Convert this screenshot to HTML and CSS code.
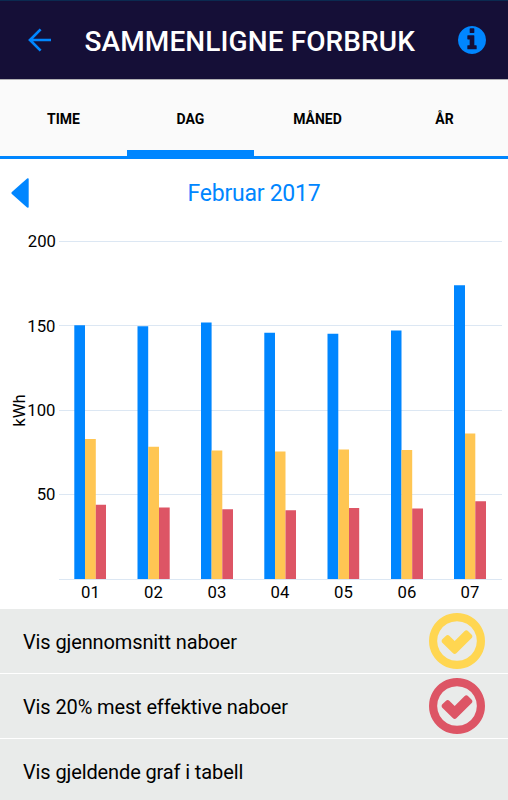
FILE: index.html
```
<!DOCTYPE html>
<html lang="no">
<head>
<meta charset="utf-8">
<title>Sammenligne forbruk</title>
<link rel="stylesheet" href="styles.css">
</head>
<body>
<header class="header">
  <svg class="back" viewBox="0 0 24 24" width="24" height="24"><path d="M12.600 1.400 2 12l10.600 10.600M2 12h21" fill="none" stroke="#0086ff" stroke-width="2.700"/></svg>
  <h1 class="title">SAMMENLIGNE FORBRUK</h1>
  <svg class="info" viewBox="128 128 1536 1536" width="28" height="28"><path fill="#0086ff" d="M1152 1376v-160q0-14-9-23t-23-9h-96v-512q0-14-9-23t-23-9h-320q-14 0-23 9t-9 23v160q0 14 9 23t23 9h96v320h-96q-14 0-23 9t-9 23v160q0 14 9 23t23 9h448q14 0 23-9t9-23zm-128-896v-192q0-14-9-23t-23-9h-192q-14 0-23 9t-9 23v192q0 14 9 23t23 9h192q14 0 23-9t9-23zm640 416q0 209-103 385.5t-279.5 279.5-385.5 103-385.5-103-279.5-279.5-103-385.5 103-385.5 279.5-279.5 385.5-103 385.5 103 279.5 279.5 103 385.5z"/></svg>
</header>
<nav class="tabs">
  <a class="tab">TIME</a>
  <a class="tab active">DAG</a>
  <a class="tab">MÅNED</a>
  <a class="tab">ÅR</a>
</nav>
<div class="period">
  <svg class="prev" viewBox="0 0 18 30" width="18" height="30"><path d="M17.700 1v28q0 1-1.600.6L.9 16q-1-1 0-2L16.100 .4q1.600-.4 1.600.6z" fill="#0086ff"/></svg>
  <span class="month">Februar 2017</span>
</div>
<svg class="chart" viewBox="0 228 508 381" width="508" height="381">
  <path class="grid" d="M59 241.500H502M59 325.500H502M59 410.500H502M59 494.500H502M59 579.500H502"/>
  <g class="ylabels">
    <text x="56" y="246.500">200</text>
    <text x="55.500" y="331.500">150</text>
    <text x="55.500" y="416">100</text>
    <text x="55.500" y="500">50</text>
  </g>
  <text class="unit" transform="translate(24.500 410.500) rotate(-90)">kWh</text>
  <path class="own" d="M74.300 579V325.300h10.700V579zM137.500 579V326.300h10.700V579zM201 579V322.500h10.600V579zM264.300 579V332.800H275V579zM327.500 579V333.700h10.800V579zM391 579V330.500h10.500V579zM454 579V285.300h11V579z"/>
  <path class="avg" d="M85 579V439h10.800V579zM148.200 579V446.800H159V579zM211.600 579V450.500h10.700V579zM275 579V451.500h10.500V579zM338.300 579V449.600H349V579zM401.500 579V450h10.700V579zM465 579V433.500h10.300V579z"/>
  <path class="best" d="M95.800 579V504.700H106V579zM159 579V507.400h10.700V579zM222.300 579V509.300H233V579zM285.500 579V510.300H296V579zM349 579V508h10.200V579zM412.200 579V508.400H423V579zM475.300 579V501.300H486V579z"/>
  <g class="xlabels">
    <text x="90.500" y="597.500">01</text>
    <text x="153.500" y="597.500">02</text>
    <text x="217" y="597.500">03</text>
    <text x="280" y="597.500">04</text>
    <text x="343.500" y="597.500">05</text>
    <text x="407" y="597.500">06</text>
    <text x="470" y="597.500">07</text>
  </g>
</svg>
<ul class="options">
  <li class="option"><span class="label">Vis gjennomsnitt naboer</span>
    <svg class="check yellow" viewBox="128 128 1536 1536" width="56" height="56"><path d="M1299 813l-422 422q-19 19-45 19t-45-19l-294-294q-19-19-19-45t19-45l102-102q19-19 45-19t45 19l147 147 275-275q19-19 45-19t45 19l102 102q19 19 19 45t-19 45zm141 83q0-148-73-273t-198-198-273-73-273 73-198 198-73 273 73 273 198 198 273 73 273-73 198-198 73-273zm224 0q0 209-103 385.5t-279.5 279.5-385.5 103-385.5-103-279.5-279.5-103-385.5 103-385.5 279.5-279.5 385.5-103 385.5 103 279.5 279.5 103 385.5z"/></svg>
  </li>
  <li class="option"><span class="label">Vis 20% mest effektive naboer</span>
    <svg class="check red" viewBox="128 128 1536 1536" width="56" height="56"><path d="M1299 813l-422 422q-19 19-45 19t-45-19l-294-294q-19-19-19-45t19-45l102-102q19-19 45-19t45 19l147 147 275-275q19-19 45-19t45 19l102 102q19 19 19 45t-19 45zm141 83q0-148-73-273t-198-198-273-73-273 73-198 198-73 273 73 273 198 198 273 73 273-73 198-198 73-273zm224 0q0 209-103 385.5t-279.5 279.5-385.5 103-385.5-103-279.5-279.5-103-385.5 103-385.5 279.5-279.5 385.5-103 385.5 103 279.5 279.5 103 385.5z"/></svg>
  </li>
  <li class="option"><span class="label">Vis gjeldende graf i tabell</span></li>
</ul>
</body>
</html>
```
FILE: styles.css
```
* { box-sizing: border-box; }
body {
  margin: 0;
  height: 800px;
  overflow: hidden;
  display: flex;
  flex-direction: column;
  background: #fff;
  color: #000;
  font-family: Roboto, "Liberation Sans", sans-serif;
}
.header {
  height: 79px;
  flex: none;
  display: flex;
  align-items: center;
  padding: 0 22px 0 28px;
  background: #150f37;
  border-top: 1px solid #0b2a50;
}
.title {
  flex: 1;
  margin: 4px 0 0 32.5px;
  color: #fff;
  font-size: 28px;
  font-weight: 500;
  letter-spacing: 0.1px;
  line-height: 32px;
  white-space: nowrap;
}
.tabs {
  height: 80px;
  flex: none;
  display: grid;
  grid-template-columns: repeat(4, 1fr);
  background: #fafafa;
  border-top: 1px solid #b0b0b4;
  border-bottom: 3px solid #0086ff;
}
.tab {
  display: flex;
  align-items: center;
  justify-content: center;
  padding-top: 2px;
  font-size: 14px;
  font-weight: 700;
}
.tab.active {
  padding-top: 8px;
  border-bottom: 6px solid #0086ff;
}
.period {
  height: 69px;
  flex: none;
  display: grid;
  grid-template-columns: 18px 1fr 18px;
  align-items: center;
  padding: 0 11px 2px;
}
.month {
  padding-top: 2px;
  text-align: center;
  color: #0086ff;
  font-size: 23px;
  letter-spacing: -0.25px;
}
.chart { flex: none; display: block; }
.grid { stroke: #dce7f3; stroke-width: 1; }
.ylabels, .xlabels, .unit { font-size: 16.7px; fill: #000; }
.ylabels { text-anchor: end; }
.xlabels, .unit { text-anchor: middle; }
.own { fill: #0086ff; }
.avg { fill: #ffc653; }
.best { fill: #dd5565; }
.options {
  margin: 0;
  padding: 0;
  list-style: none;
  flex: none;
}
.option {
  height: 65px;
  display: flex;
  align-items: center;
  justify-content: space-between;
  padding: 0 23px;
  background: #e9ebea;
  border-bottom: 1px solid #fff;
  font-size: 20px;
}
.label {
  padding-top: 2px;
  letter-spacing: -0.12px;
}
.yellow { fill: #ffd651; }
.red { fill: #dd5565; }
```
